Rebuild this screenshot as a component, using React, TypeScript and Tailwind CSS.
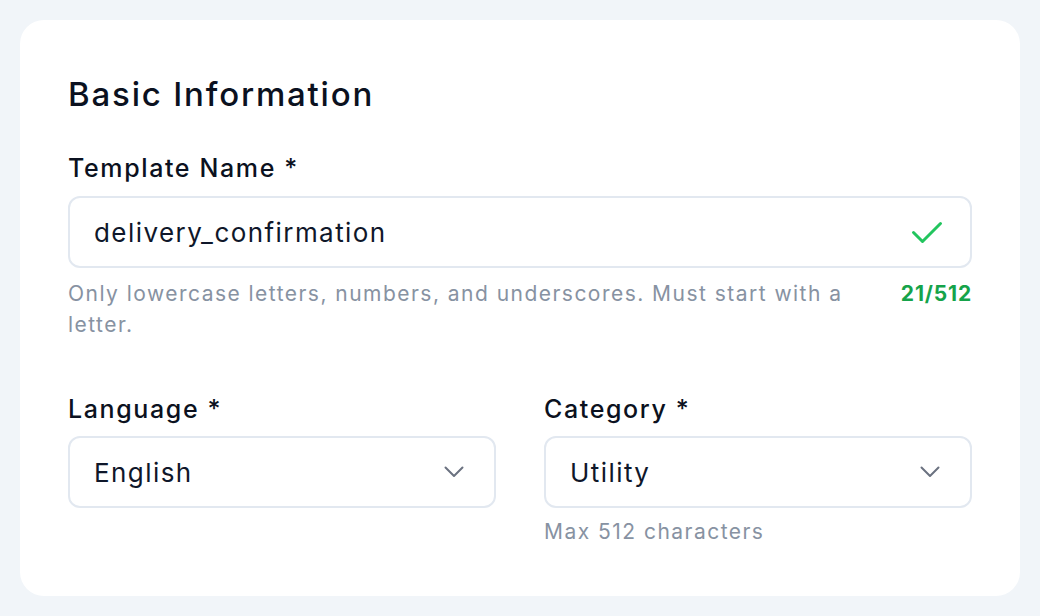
import React from "react";

function Chevron() {
  return (
    <svg width="20" height="12" viewBox="0 0 20 12" fill="none" stroke="#6b7280" strokeWidth="2" strokeLinecap="round" strokeLinejoin="round">
      <path d="M1.5 1.5 10 10l8.5-8.5" />
    </svg>
  );
}

function SelectBox({ value }: { value: string }) {
  return (
    <div className="flex h-[72px] items-center justify-between rounded-xl border-2 border-[#e2e8f0] bg-white pl-6 pr-[30px]">
      <span className="text-[26px] tracking-[0.055em] text-[#0f172a]">{value}</span>
      <Chevron />
    </div>
  );
}

export default function App() {
  return (
    <div className="min-h-[616px] bg-[#f1f5f9] p-5 font-['Inter',sans-serif]">
      {/* card */}
      <div className="h-[576px] rounded-3xl bg-white px-12 pt-12">
        <h2 className="text-[33px] font-medium leading-[52px] tracking-[0.055em] text-[#0b1120]">Basic Information</h2>

        <label className="mt-8 block text-[25px] font-medium leading-8 tracking-[0.065em] text-[#0b1120]">Template Name *</label>
        <div className="mt-3 flex h-[72px] items-center justify-between rounded-xl border-2 border-[#e2e8f0] bg-white pl-6 pr-[27px]">
          <span className="text-[26px] tracking-[0.055em] text-[#0f172a]">delivery_confirmation</span>
          <svg width="32" height="24" viewBox="0 0 32 24" fill="none" stroke="#22c55e" strokeWidth="3" strokeLinecap="round" strokeLinejoin="round">
            <path d="M2.5 12.5 11.5 21.5 29.5 3.5" />
          </svg>
        </div>
        <div className="mt-[10px] flex justify-between gap-8">
          <p className="text-[21px] leading-[31px] tracking-[0.07em] text-[#8792a2]">
            Only lowercase letters, numbers, and underscores. Must start with a letter.
          </p>
          <span className="shrink-0 text-[21px] font-bold leading-[31px] tracking-[0.04em] text-[#16a34a]">21/512</span>
        </div>

        <div className="mt-[53px] grid grid-cols-2 gap-12">
          <div>
            <label className="block text-[25px] font-medium leading-8 tracking-[0.065em] text-[#0b1120]">Language *</label>
            <div className="mt-[11px]">
              <SelectBox value="English" />
            </div>
          </div>
          <div>
            <label className="block text-[25px] font-medium leading-8 tracking-[0.065em] text-[#0b1120]">Category *</label>
            <div className="mt-[11px]">
              <SelectBox value="Utility" />
            </div>
            <p className="mt-2 text-[21px] leading-[31px] tracking-[0.07em] text-[#8792a2]">Max 512 characters</p>
          </div>
        </div>
      </div>
    </div>
  );
}
